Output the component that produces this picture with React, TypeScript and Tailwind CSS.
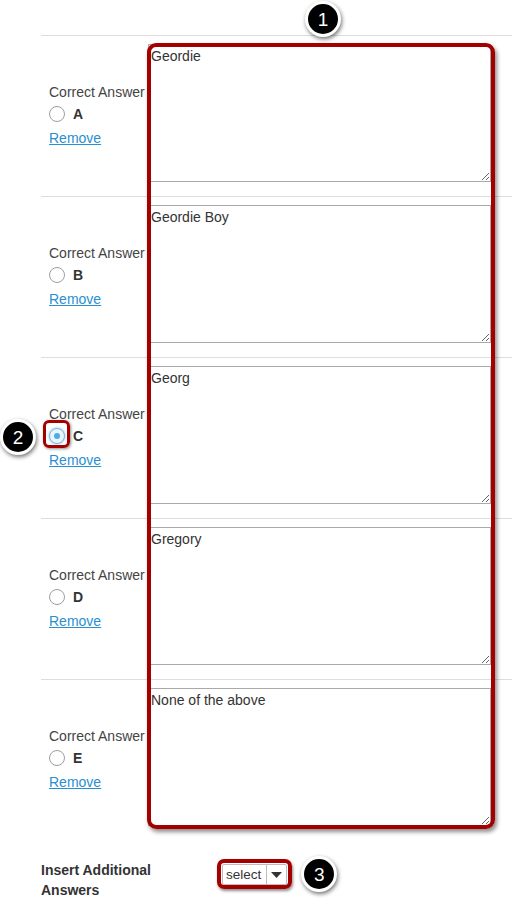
import React from "react";

const rows = [
  { letter: "A", text: "Geordie", selected: false },
  { letter: "B", text: "Geordie Boy", selected: false },
  { letter: "C", text: "Georg", selected: true },
  { letter: "D", text: "Gregory", selected: false },
  { letter: "E", text: "None of the above", selected: false },
];

function Badge({ n }: { n: number }) {
  return (
    <div className="w-[36px] h-[36px] rounded-full bg-black border-[3px] border-white shadow-[1px_2px_4px_rgba(0,0,0,0.55)] flex items-center justify-center text-white text-[19px] leading-none">
      {n}
    </div>
  );
}

export default function App() {
  return (
    <div className="relative w-[512px] h-[905px] bg-white overflow-hidden font-['Liberation_Sans',Arial,sans-serif] text-[14px] text-[#333]">
      <div className="pt-[35px] pl-[41px]">
        {rows.map((r) => (
          <div key={r.letter} className="flex h-[161px] border-t border-[#dddddd]">
            <div className="w-[107px] pl-[8px] pt-[46px] whitespace-nowrap overflow-hidden">
              <div className="h-[20px] leading-[20px] text-[#444]">Correct Answer</div>
              <div className="h-[22px] mt-[1px] flex items-center">
                <span className="relative inline-block">
                  {r.selected ? (
                    <span className="flex w-[16px] h-[16px] rounded-full border border-[#7fb6de] bg-[#eaf5fc] items-center justify-center shadow-[0_0_3px_#7fc4ee]">
                      <span className="w-[6px] h-[6px] rounded-full bg-[#4aaee6]"></span>
                    </span>
                  ) : (
                    <span className="block w-[16px] h-[16px] rounded-full border border-[#9e9e9e] bg-white"></span>
                  )}
                  {r.selected && (
                    <span className="absolute left-[-6px] top-[-8px] w-[27px] h-[28px] rounded-[6px] border-[3px] border-[#a50000] shadow-[1px_1px_3px_rgba(0,0,0,0.45)]"></span>
                  )}
                </span>
                <span className="ml-[8px] font-bold text-[#333]">{r.letter}</span>
              </div>
              <div className="h-[22px] mt-[2px] leading-[22px]">
                <span className="text-[#2a8fd0] underline">Remove</span>
              </div>
            </div>
            <div className="pt-[8px]">
              <textarea
                defaultValue={r.text}
                className="block w-[343px] h-[138px] border border-[#a9a9a9] px-[2px] pt-[3px] pb-[2px] text-[14px] leading-[17px] text-[#333] font-['Liberation_Sans',Arial,sans-serif] outline-none"
              />
            </div>
          </div>
        ))}
        <div className="border-t border-transparent"></div>
        <div className="flex mt-[19px]">
          <div className="w-[181px] font-bold text-[14px] leading-[20px] text-[#333]">
            Insert Additional
            <br />
            Answers
          </div>
          <div className="flex items-start pt-[4px]">
            <div className="relative">
              <div className="flex items-center h-[21px] border border-[#bdbdbd] bg-white rounded-[2px]">
                <span className="pl-[3px] pr-[5px] text-[13.5px] text-[#333] leading-[19px]">select</span>
                <span className="w-px h-[21px] bg-[#bdbdbd]"></span>
                <span className="w-[19px] flex justify-center">
                  <svg width="11" height="6" viewBox="0 0 11 6"><path d="M0 0 L11 0 L5.5 6 Z" fill="#333" /></svg>
                </span>
              </div>
              <div className="absolute left-[-5px] top-[-5px] right-[-5px] h-[30px] rounded-[7px] border-[4px] border-[#a50000] shadow-[1px_2px_3px_rgba(0,0,0,0.45)]"></div>
            </div>
            <div className="ml-[14px] mt-[-8px]">
              <Badge n={3} />
            </div>
          </div>
        </div>
      </div>

      {/* big highlight box */}
      <div className="absolute left-[147px] top-[43px] w-[348px] h-[786px] rounded-[9px] border-[4px] border-[#a50000] shadow-[2px_3px_4px_rgba(0,0,0,0.45)] pointer-events-none"></div>

      <div className="absolute left-[305px] top-[1px]">
        <Badge n={1} />
      </div>
      <div className="absolute left-[0px] top-[419px]">
        <Badge n={2} />
      </div>
    </div>
  );
}
